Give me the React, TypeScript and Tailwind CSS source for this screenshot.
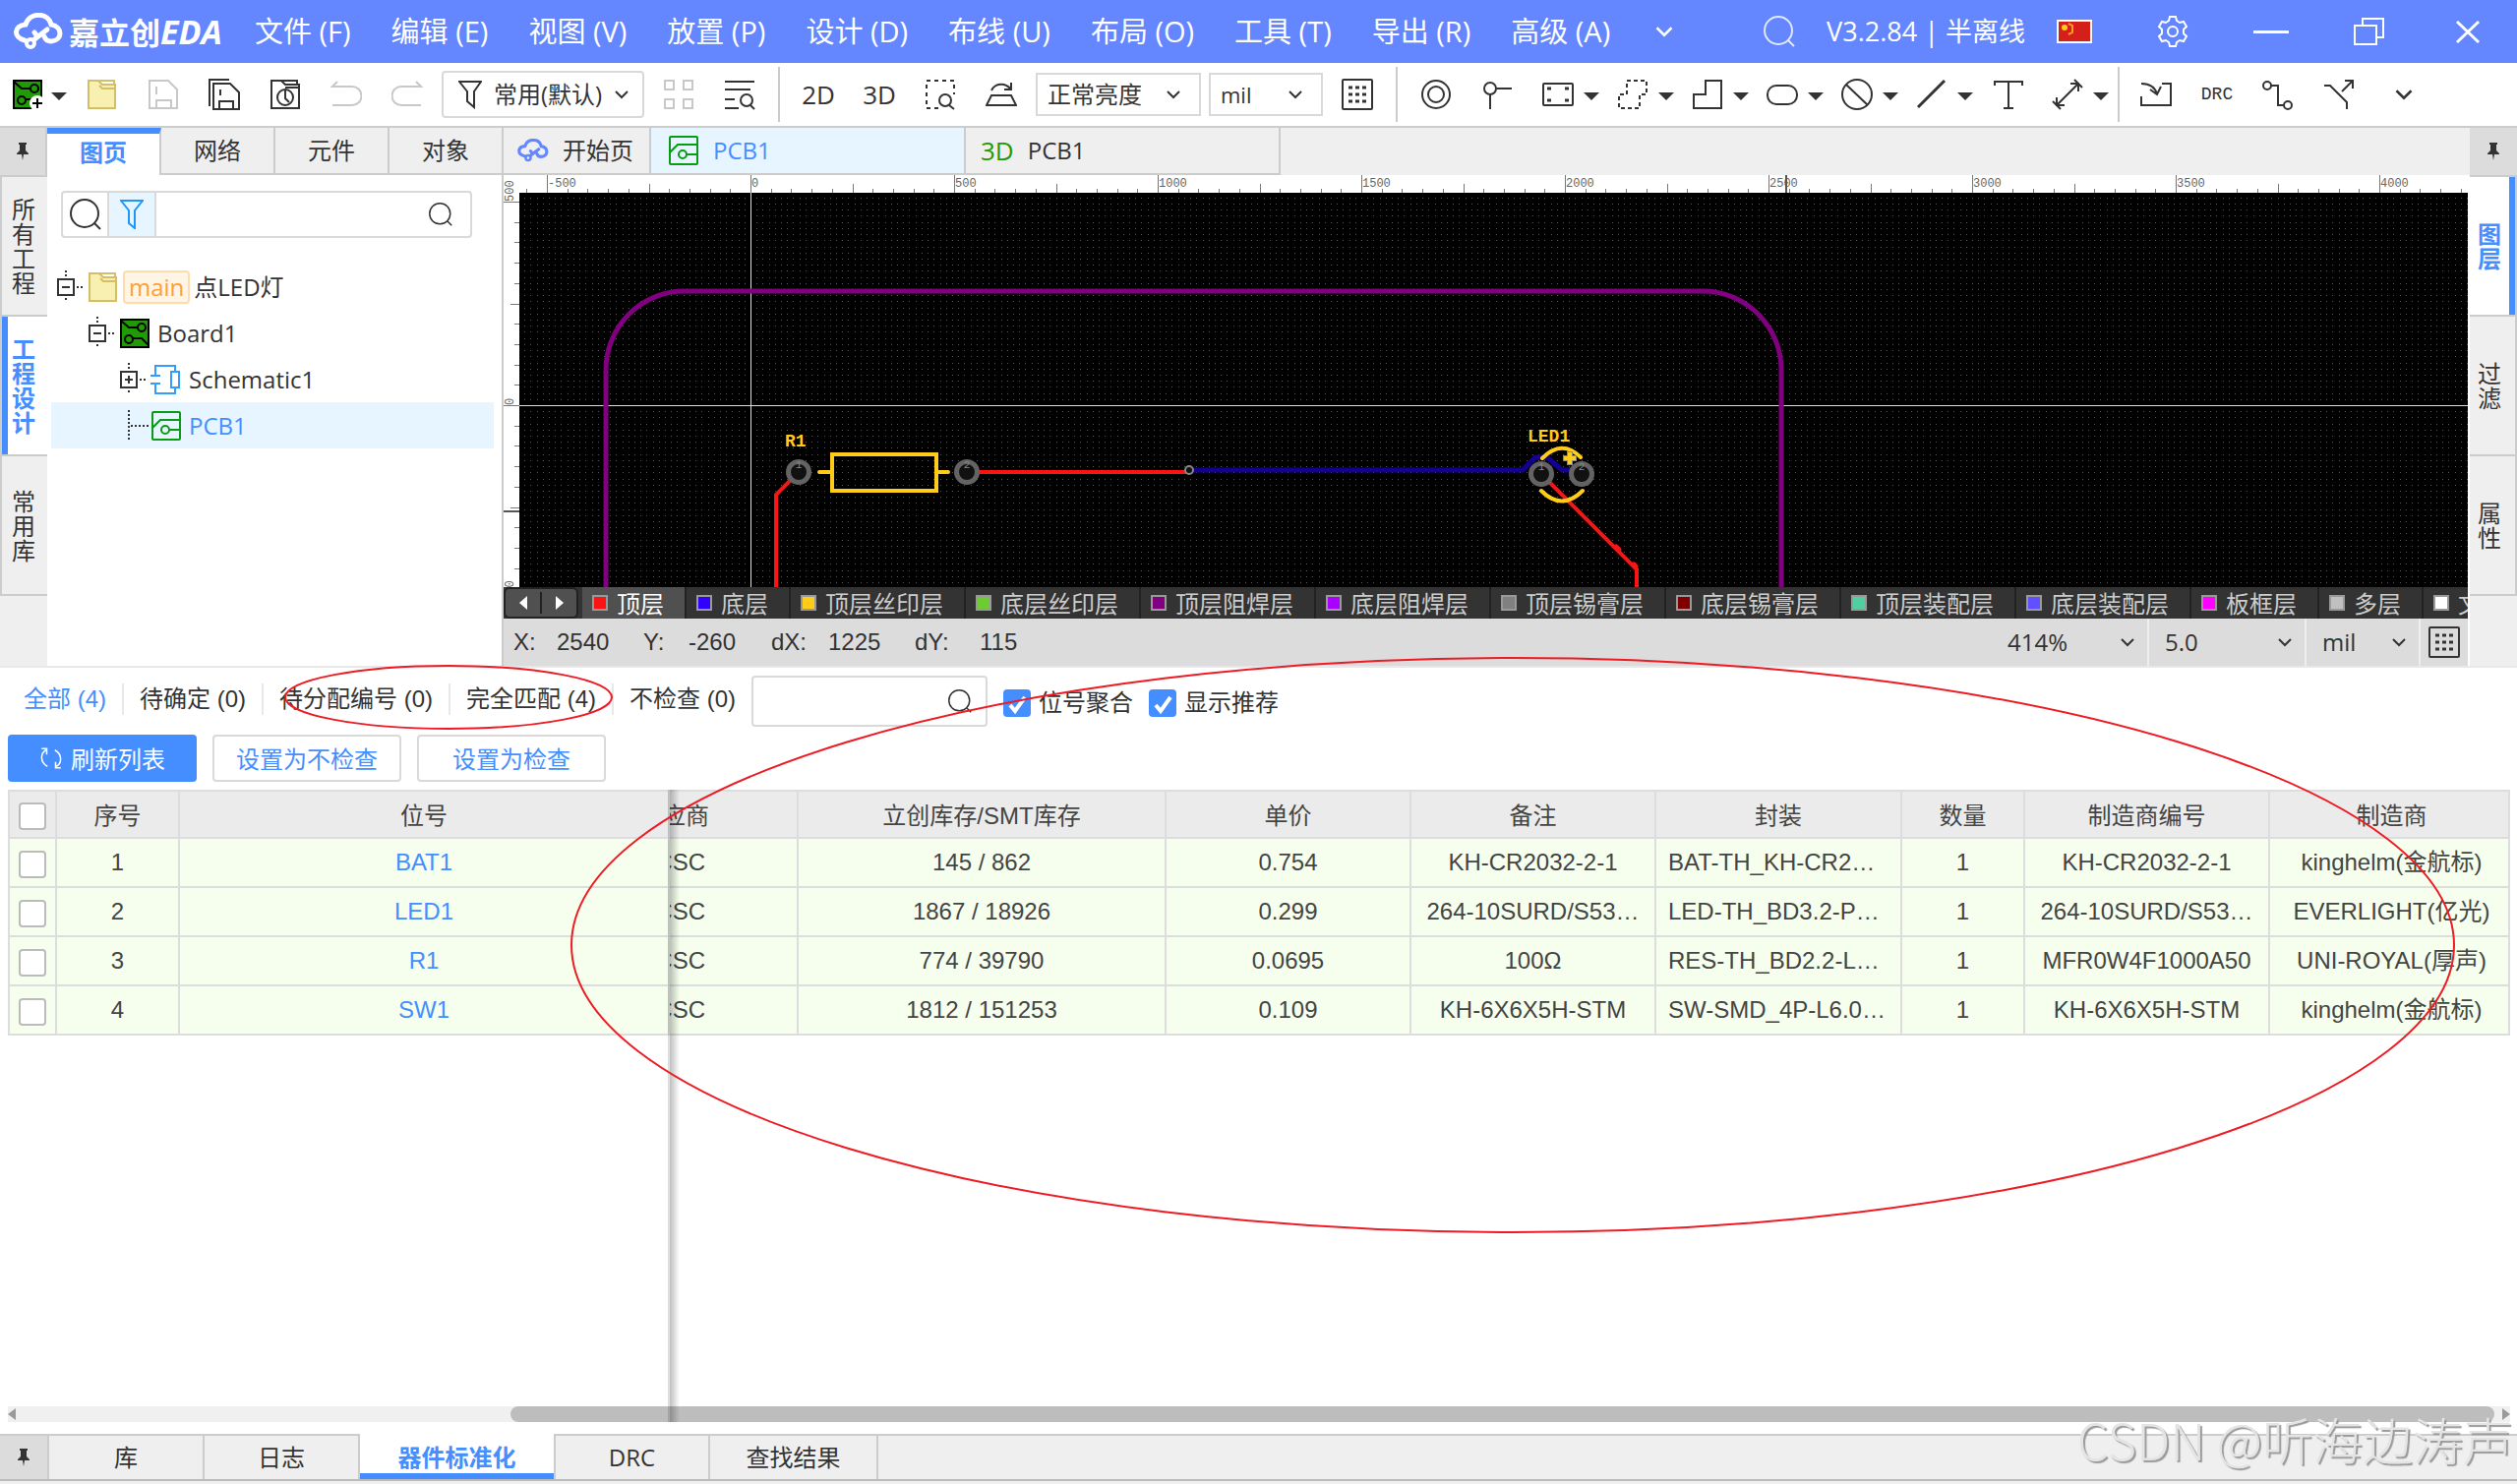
import React from "react";

const menus = [
  "文件 (F)",
  "编辑 (E)",
  "视图 (V)",
  "放置 (P)",
  "设计 (D)",
  "布线 (U)",
  "布局 (O)",
  "工具 (T)",
  "导出 (R)",
  "高级 (A)",
];

const layers = [
  { name: "顶层", color: "bg-[#fa1414]" },
  { name: "底层", color: "bg-[#3200ff]" },
  { name: "顶层丝印层", color: "bg-[#ffcc1a]" },
  { name: "底层丝印层", color: "bg-[#6ecb33]" },
  { name: "顶层阻焊层", color: "bg-[#800080]" },
  { name: "底层阻焊层", color: "bg-[#aa00ff]" },
  { name: "顶层锡膏层", color: "bg-[#808080]" },
  { name: "底层锡膏层", color: "bg-[#800000]" },
  { name: "顶层装配层", color: "bg-[#50d0a0]" },
  { name: "底层装配层", color: "bg-[#6050ff]" },
  { name: "板框层", color: "bg-[#ff00ff]" },
  { name: "多层", color: "bg-[#c0c0c0]" },
  { name: "文档层", color: "bg-white" },
];

const parts = [
  {
    id: 1,
    ref: "BAT1",
    stock: "145 / 862",
    price: "0.754",
    note: "KH-CR2032-2-1",
    pack: "BAT-TH_KH-CR2…",
    mpn: "KH-CR2032-2-1",
    maker: "kinghelm(金航标)",
  },
  {
    id: 2,
    ref: "LED1",
    stock: "1867 / 18926",
    price: "0.299",
    note: "264-10SURD/S53…",
    pack: "LED-TH_BD3.2-P…",
    mpn: "264-10SURD/S53…",
    maker: "EVERLIGHT(亿光)",
  },
  {
    id: 3,
    ref: "R1",
    stock: "774 / 39790",
    price: "0.0695",
    note: "100Ω",
    pack: "RES-TH_BD2.2-L…",
    mpn: "MFR0W4F1000A50",
    maker: "UNI-ROYAL(厚声)",
  },
  {
    id: 4,
    ref: "SW1",
    stock: "1812 / 151253",
    price: "0.109",
    note: "KH-6X6X5H-STM",
    pack: "SW-SMD_4P-L6.0…",
    mpn: "KH-6X6X5H-STM",
    maker: "kinghelm(金航标)",
  },
];

const Icon = ({
  children,
  className = "size-8",
}: {
  children: React.ReactNode;
  className?: string;
}) => (
  <svg
    viewBox="0 0 32 32"
    className={`${className} shrink-0`}
    fill="none"
    stroke="currentColor"
    strokeWidth="2"
    aria-hidden="true"
  >
    {children}
  </svg>
);

const Chevron = ({ className = "size-4" }: { className?: string }) => (
  <svg
    viewBox="0 0 16 16"
    className={`${className} shrink-0 pointer-events-none`}
    fill="none"
    stroke="currentColor"
    strokeWidth="2"
    aria-hidden="true"
  >
    <path d="M2 5l6 6 6-6" />
  </svg>
);

const Caret = () => (
  <svg viewBox="0 0 16 8" className="mt-1 h-2 w-4 shrink-0" fill="#333" aria-hidden="true">
    <path d="M0 0h16l-8 8z" />
  </svg>
);

const SearchIcon = ({ className = "size-8" }: { className?: string }) => (
  <Icon className={className}>
    <circle cx="15" cy="15" r="14" />
    <path d="M25 25l6 6" />
  </Icon>
);

const PinIcon = () => (
  <svg viewBox="0 0 12 18" className="h-[18px] w-3" fill="#333" aria-hidden="true">
    <path d="M2 0h8v2H9v6l3 3v1H7l-1 6-1-6H0v-1l3-3V2H2z" />
  </svg>
);

const CloudIcon = ({ className }: { className: string }) => (
  <svg
    viewBox="0 0 50 38"
    className={`${className} shrink-0`}
    fill="none"
    stroke="currentColor"
    strokeWidth="5"
    strokeLinecap="round"
    aria-hidden="true"
  >
    <path d="M11 28C-1 25 0 13 12 12 16-1 35-1 38 12c12 2 12 16 0 17-4 0-6-2-7-5" />
    <path d="M21 27l13-10M21 20l3 4" />
    <circle cx="17" cy="31" r="4" strokeWidth="4" />
  </svg>
);

const FolderIcon = () => (
  <Icon>
    <path d="M2 2h10l4 4h13v24H2z" fill="#f7f0b0" stroke="#d4bf66" />
    <path d="M12 2h16v4M13 7l3 3h13" stroke="#d4bf66" />
  </Icon>
);

const BoardIcon = ({ plus = false }: { plus?: boolean }) => (
  <Icon>
    <path d="M2 2h28v28H2z" fill="#1f9b06" stroke="#000" />
    <path d="M2 3l8 7h10M30 28l-7-7h-9" stroke="#000" />
    <circle cx="23" cy="10" r="4" stroke="#000" />
    <circle cx="10" cy="22" r="4" stroke="#000" />
    {plus && (
      <>
        <circle cx="26" cy="25" r="8" fill="#fff" stroke="none" />
        <path d="M26 20v10M21 25h10" stroke="#000" />
      </>
    )}
  </Icon>
);

const PcbIcon = () => (
  <Icon>
    <rect x="2" y="2" width="28" height="28" rx="1" stroke="#0a9a14" />
    <path d="M2 18l8-8h20M19 20h11" stroke="#0a9a14" />
    <circle cx="15" cy="20" r="4" stroke="#0a9a14" />
  </Icon>
);

const SchematicIcon = () => (
  <Icon>
    <path d="M5 12V2h20v6M5 20v10h20v-6M0 12h10M0 20h10" stroke="#339cff" />
    <rect x="21" y="8" width="8" height="16" stroke="#339cff" />
  </Icon>
);

const GridIcon = () => (
  <Icon>
    <rect x="1" y="1" width="30" height="30" rx="1" />
    <path d="M7 9h18M7 16h18M7 23h18" strokeWidth="3" strokeDasharray="4 3" />
  </Icon>
);

const Tool = ({
  label,
  className = "",
  children,
}: {
  label: string;
  className?: string;
  children: React.ReactNode;
}) => (
  <button
    aria-label={label}
    className={`flex h-12 w-[62px] shrink-0 items-center justify-center ${className}`}
  >
    {children}
  </button>
);

const ToolMenu = ({ label, children }: { label: string; children: React.ReactNode }) => (
  <button
    aria-label={label}
    className="flex h-12 w-[76px] shrink-0 items-center justify-center gap-[10px]"
  >
    {children}
    <Caret />
  </button>
);

const Divider = () => <div className="mx-2 h-14 w-[2px] shrink-0 bg-[#ccc]" />;

const Title = () => (
  <header className="flex h-16 shrink-0 items-center bg-[#6487ff] pl-[14px] text-[29px] leading-9 text-white">
    <div className="flex w-[245px] shrink-0 items-center gap-[6px] font-bold">
      <CloudIcon className="h-[38px] w-[50px]" />
      <span className="text-[31px] whitespace-nowrap">
        嘉立创<i className="text-[34px]">EDA</i>
      </span>
    </div>
    <nav className="flex items-center gap-[41px] whitespace-nowrap">
      {menus.map((m) => (
        <button key={m}>{m}</button>
      ))}
      <button aria-label="更多菜单" className="ml-1">
        <Chevron className="size-5" />
      </button>
    </nav>
    <div className="ml-auto flex items-center whitespace-nowrap">
      <button aria-label="搜索" className="text-white/80">
        <SearchIcon />
      </button>
      <span className="ml-8 text-[27px]">V3.2.84 | 半离线</span>
      <div className="flex w-[100px] justify-center">
        <svg viewBox="0 0 36 24" className="h-6 w-9" aria-hidden="true">
          <path d="M0 0h36v24H0z" fill="#fff" />
          <path d="M2 2h32v20H2z" fill="#d41f1a" />
          <circle cx="8" cy="8" r="3" fill="#ffc91f" />
          <path d="M12 4l4 2v7l-4 2" fill="none" stroke="#f3a01f" strokeWidth="2" />
        </svg>
      </div>
      <button aria-label="设置" className="flex w-[100px] justify-center">
        <Icon>
          <path d="M13 1h6l1 4 3 2 4-1 3 5-3 3v4l3 3-3 5-4-1-3 2-1 4h-6l-1-4-3-2-4 1-3-5 3-3v-4l-3-3 3-5 4 1 3-2z" />
          <circle cx="16" cy="16" r="5" />
        </Icon>
      </button>
      <button aria-label="最小化" className="flex h-8 w-[100px] items-center justify-center">
        <span className="h-[3px] w-9 bg-white" />
      </button>
      <button aria-label="还原" className="flex w-[100px] justify-center">
        <Icon>
          <path d="M1 10h22v19H1zM9 10V3h21v19h-7" />
        </Icon>
      </button>
      <button aria-label="关闭" className="flex w-[100px] justify-center">
        <Icon>
          <path d="M5 6l22 21M27 6L5 27" strokeWidth="3" />
        </Icon>
      </button>
    </div>
  </header>
);

const Toolbar = () => (
  <div className="flex h-[66px] shrink-0 items-center border-b-2 border-[#ccc] bg-white text-[#333]">
    <button aria-label="新建" className="ml-3 flex h-12 w-[61px] shrink-0 items-center gap-2">
      <BoardIcon plus />
      <Caret />
    </button>
    <Tool label="打开">
      <FolderIcon />
    </Tool>
    <Tool label="保存" className="text-[#c8c8c8]">
      <Icon>
        <path d="M2 2h19l9 9v19H2zM9 30v-8h15v8M9 8v8" />
      </Icon>
    </Tool>
    <Tool label="全部保存">
      <Icon>
        <path d="M1 28V1h20M5 5h17l9 9v17H5zM11 31v-8h14v8M12 11v6" />
      </Icon>
    </Tool>
    <Tool label="历史">
      <Icon>
        <path d="M2 30V2h10l4 4h14v24zM12 2h16v4M16 9h14" />
        <circle cx="16" cy="19" r="8" />
        <path d="M16 11v9l4 4" />
      </Icon>
    </Tool>
    <Tool label="撤销" className="text-[#c8c8c8]">
      <Icon>
        <path d="M7 3L2 8h20a9 9 0 0 1 0 19H2" />
      </Icon>
    </Tool>
    <Tool label="重做" className="text-[#c8c8c8]">
      <Icon>
        <path d="M25 3l5 5H10a9 9 0 0 0 0 19h20" />
      </Icon>
    </Tool>
    <button className="ml-1 flex h-12 w-[206px] shrink-0 items-center rounded border-2 border-[#d9d9d9] pl-[15px] text-2xl whitespace-nowrap">
      <svg viewBox="0 0 24 30" className="h-[30px] w-6" fill="none" stroke="#333" strokeWidth="2">
        <path d="M1 2h22l-7 10v16l-7-6V12z" />
      </svg>
      <span className="ml-3">常用(默认)</span>
      <Chevron className="ml-3 size-4" />
    </button>
    <Tool label="阵列" className="ml-1 text-[#c8c8c8]">
      <Icon>
        <path d="M2 2h9v9H2zM21 2h9v9h-9zM2 21h9v9H2zM21 21h9v9h-9z" />
      </Icon>
    </Tool>
    <Tool label="查找">
      <Icon>
        <path d="M1 3h30M1 11h26M1 21h10M1 30h14" />
        <circle cx="23" cy="22" r="6" />
        <path d="M27 27l4 4" />
      </Icon>
    </Tool>
    <Divider />
    <Tool label="2D">
      <span className="text-[26px]">2D</span>
    </Tool>
    <Tool label="3D">
      <span className="text-[26px]">3D</span>
    </Tool>
    <Tool label="框选缩放">
      <Icon>
        <path d="M14 30H2V2h28v14" strokeDasharray="4 4" />
        <circle cx="21" cy="22" r="6" />
        <path d="M25 27l5 4" />
      </Icon>
    </Tool>
    <Tool label="翻转">
      <Icon>
        <path d="M6 17h20l5 10H1zM6 12c4-8 14-8 19-2M26 4v7h-7" />
      </Icon>
    </Tool>
    <div className="relative ml-1 w-[168px] shrink-0">
      <select
        aria-label="亮度"
        className="h-11 w-full appearance-none border-2 border-[#d9d9d9] pl-[10px] text-2xl"
      >
        <option>正常亮度</option>
      </select>
      <Chevron className="absolute top-[14px] right-5 size-4" />
    </div>
    <div className="relative ml-2 w-[116px] shrink-0">
      <select
        aria-label="单位"
        className="h-11 w-full appearance-none border-2 border-[#d9d9d9] pl-[10px] text-[22px]"
      >
        <option>mil</option>
      </select>
      <Chevron className="absolute top-[14px] right-5 size-4" />
    </div>
    <Tool label="网格" className="ml-1">
      <GridIcon />
    </Tool>
    <Divider />
    <Tool label="过孔">
      <Icon>
        <circle cx="16" cy="16" r="14" />
        <circle cx="16" cy="16" r="8" />
      </Icon>
    </Tool>
    <Tool label="焊盘">
      <Icon>
        <circle cx="9" cy="10" r="6" />
        <path d="M9 16v15M15 10h16" />
      </Icon>
    </Tool>
    <div className="ml-[6px] flex">
      <ToolMenu label="器件">
        <Icon>
          <rect x="1" y="5" width="30" height="22" rx="1" />
          <path d="M5 10h4M23 10h4M5 22h4M23 22h4" strokeWidth="3" />
        </Icon>
      </ToolMenu>
      <ToolMenu label="选区">
        <Icon>
          <path d="M10 2h20v14h-7v14H2V16h8z" strokeDasharray="4 3" />
        </Icon>
      </ToolMenu>
      <ToolMenu label="多边形">
        <Icon>
          <path d="M14 2h16v28H2V16h12z" />
        </Icon>
      </ToolMenu>
      <ToolMenu label="椭圆">
        <Icon>
          <rect x="1" y="7" width="30" height="19" rx="9" />
        </Icon>
      </ToolMenu>
      <ToolMenu label="禁止区域">
        <Icon>
          <circle cx="16" cy="16" r="15" />
          <path d="M5 6l22 21" />
        </Icon>
      </ToolMenu>
      <ToolMenu label="线条">
        <Icon>
          <path d="M2 29L29 2" strokeWidth="3" />
        </Icon>
      </ToolMenu>
    </div>
    <Tool label="文本" className="pr-2">
      <Icon>
        <path d="M2 7V3h28v4M16 3v27M11 30h10" />
      </Icon>
    </Tool>
    <ToolMenu label="尺寸">
      <Icon>
        <path d="M5 27L27 5M1 23l8 8M23 1l8 8M5 19v8h8M19 5h8v8" />
      </Icon>
    </ToolMenu>
    <div className="mr-[6px] h-14 w-[2px] shrink-0 bg-[#ccc]" />
    <Tool label="导入">
      <Icon>
        <path d="M22 5h9v22H1v-9M1 5c8 0 14 3 16 11M10 11l7 5 4-8" />
      </Icon>
    </Tool>
    <Tool label="DRC">
      <span className="font-['Liberation_Mono',monospace] text-lg">DRC</span>
    </Tool>
    <Tool label="布线">
      <Icon>
        <circle cx="5" cy="7" r="4" />
        <path d="M9 7h7v20h6" />
        <circle cx="26" cy="27" r="4" />
      </Icon>
    </Tool>
    <Tool label="推挤">
      <Icon>
        <path d="M1 7h6l17 17v7M19 13L30 2M22 2h8v8" />
      </Icon>
    </Tool>
    <Tool label="更多工具" className="ml-1">
      <Chevron className="size-5" />
    </Tool>
  </div>
);

const SideTab = ({
  text,
  active,
  side,
}: {
  text: string;
  active?: boolean;
  side: "left" | "right";
}) => (
  <button
    className={`flex h-[142px] w-full shrink-0 items-center border-b-2 border-[#ccc] text-2xl leading-[25px] ${
      side === "left" ? "border-l-2" : "justify-end border-r-2"
    } ${active ? "bg-white font-bold text-[#448eff]" : "bg-[#efefef] text-[#333]"}`}
  >
    {side === "left" && (
      <span className={`mr-1 w-[6px] self-stretch ${active ? "bg-[#448eff]" : ""}`} />
    )}
    <span className="w-6 break-all">{text}</span>
    {side === "right" && (
      <span className={`ml-2 w-[6px] self-stretch ${active ? "bg-[#448eff]" : ""}`} />
    )}
  </button>
);

const Expander = ({ open }: { open: boolean }) => (
  <svg viewBox="0 0 32 36" className="h-9 w-8 shrink-0" fill="none" stroke="#333" strokeWidth="2">
    <rect x="2" y="10" width="16" height="16" />
    <path d={open ? "M6 18h8" : "M6 18h8M10 14v8"} />
    <path d="M10 1v7M10 29v4M21 18h8" strokeDasharray="2 2" />
  </svg>
);

const LeftPanel = () => (
  <aside className="flex w-[464px] shrink-0 flex-col border-r-2 border-[#ccc] bg-white text-2xl text-[#333]">
    <div className="flex h-12">
      <button className="flex-1 border-t-[6px] border-r-2 border-t-[#448eff] border-r-[#ccc] pb-1 font-bold text-[#448eff]">
        图页
      </button>
      {["网络", "元件", "对象"].map((t) => (
        <button key={t} className="flex-1 border-r-2 border-b-2 border-[#ccc] bg-[#efefef] last:border-r-0">
          {t}
        </button>
      ))}
    </div>
    <div className="mt-4 mr-[30px] ml-[14px] flex h-12 rounded border-2 border-[#d9d9d9]">
      <button aria-label="搜索" className="flex w-[45px] items-center justify-center">
        <SearchIcon />
      </button>
      <button
        aria-label="筛选"
        className="flex w-[50px] items-center justify-center border-x-2 border-[#d9d9d9] bg-[#e6f5ff]"
      >
        <svg viewBox="0 0 24 30" className="h-[30px] w-6" fill="none" stroke="#1a96ff" strokeWidth="2">
          <path d="M1 1h22l-8 10v18l-6-5V11z" />
        </svg>
      </button>
      <input aria-label="筛选内容" className="min-w-0 flex-1 px-2 outline-none" />
      <button aria-label="查找" className="pr-[18px]">
        <SearchIcon className="size-6" />
      </button>
    </div>
    <div className="mt-[26px] mr-2 ml-1">
      <div className="flex h-[47px] items-center pl-[5px]">
        <Expander open />
        <FolderIcon />
        <span className="ml-1 rounded border-2 border-[#ffdcaa] bg-[#fff5e6] px-1 leading-[30px] text-[#ffa033]">
          main
        </span>
        <span className="ml-1">点LED灯</span>
      </div>
      <div className="flex h-[47px] items-center pl-[37px]">
        <Expander open />
        <BoardIcon />
        <span className="ml-[7px]">Board1</span>
      </div>
      <div className="flex h-[47px] items-center pl-[69px]">
        <Expander open={false} />
        <SchematicIcon />
        <span className="ml-[7px]">Schematic1</span>
      </div>
      <div className="flex h-[47px] items-center bg-[#e6f5ff] pl-[69px] text-[#448eff]">
        <svg viewBox="0 0 32 36" className="h-9 w-8 shrink-0" fill="none" stroke="#333" strokeWidth="2">
          <path d="M10 2v32M12 18h18" strokeDasharray="2 2" />
        </svg>
        <PcbIcon />
        <span className="ml-[7px]">PCB1</span>
      </div>
    </div>
  </aside>
);

// 414% zoom: 50 mil is 20.7px
const STEP = 20.7;
const DOT = 6.21;
const OX = 251;
const OY = 234;

const dotRow = Array.from({ length: 520 }, (_, i) => `M${Math.round((i - 38) * DOT)} 0h1`).join("");

const Pad = ({ x, y, n }: { x: number; y: number; n: string }) => (
  <g>
    <circle cx={x} cy={y} r="10.5" fill="#111" stroke="#636363" strokeWidth="5" />
    <text x={x} y={y - 4} textAnchor="middle" fontSize="11" fill="#888">
      {n}
    </text>
  </g>
);

const Board = () => (
  <svg className="block h-[419px] w-full bg-white font-['Liberation_Mono',monospace]" aria-label="PCB 画布">
    <defs>
      <path id="dots" d={dotRow} stroke="#555" strokeWidth="1" shapeRendering="crispEdges" />
      <clipPath id="work">
        <rect x="16" y="18" width="4000" height="401" />
      </clipPath>
    </defs>
    <g stroke="#777" shapeRendering="crispEdges">
      {Array.from({ length: 120 }, (_, i) => {
        const n = i - 11;
        const x = Math.round(OX + n * STEP);
        return <path key={n} d={`M${x + 0.5} ${n % 10 === 0 ? 0 : n % 5 === 0 ? 9 : 14}V18`} />;
      })}
      {Array.from({ length: 20 }, (_, i) => {
        const n = i - 10;
        const y = Math.round(OY + n * STEP);
        return <path key={n} d={`M${n % 10 === 0 ? 0 : n % 5 === 0 ? 7 : 11} ${y + 0.5}H16`} />;
      })}
    </g>
    <g fill="#666" fontSize="12">
      {Array.from({ length: 10 }, (_, i) => (
        <text key={i} x={Math.round(OX + (i - 1) * 207) + 1} y="12">
          {(i - 1) * 500}
        </text>
      ))}
      {[500, 0, -500].map((v) => (
        <text key={v} transform={`translate(10 ${Math.round(OY - v * 0.414)}) rotate(-90)`}>
          {v}
        </text>
      ))}
    </g>
    <path d="M1304 0V18M0 342H16" stroke="#555" strokeWidth="2" />
    <g clipPath="url(#work)">
      <rect x="16" y="18" width="100%" height="401" fill="#000" />
      <g transform={`translate(${OX} ${OY})`} fill="none">
        {Array.from({ length: 66 }, (_, i) => (
          <use key={i} href="#dots" y={Math.round((i - 35) * DOT) + 0.5} />
        ))}
        <path d="M.5-234V200M-251 .5H4000" stroke="#ddd" shapeRendering="crispEdges" />
        <path d="M-147 200V-36a80 80 0 0 1 80-80H968a80 80 0 0 1 80 80V200" stroke="#800080" strokeWidth="5" />
        <path d="M451 66H785l13-13h12l15 13h20" stroke="#140090" strokeWidth="5" />
        <g stroke="#fa1414" strokeWidth="4" strokeLinecap="round">
          <path d="M220 68H446M49 68L26 91V200M804 70l97 97V200" />
          <path d="M880 144l3 3M898 162l2 2" strokeWidth="5" />
        </g>
        <g stroke="#ffcc1a" strokeWidth="4" strokeLinecap="round">
          <path d="M83 50H189V87H83zM70 68H83M189 68h12" />
          <path d="M805 54q20-20 39-1M804 87q21 21 42 0" />
        </g>
        <Pad x={49} y={68} n="1" />
        <Pad x={220} y={68} n="2" />
        <Pad x={804} y={70} n="1" />
        <Pad x={845} y={70} n="2" />
        <circle cx="446" cy="66" r="4" fill="#111" stroke="#888" strokeWidth="2" />
        <path d="M833 47v14M826 54h14" stroke="#888" strokeWidth="6" />
        <path d="M833 48v12M827 54h12" stroke="#ffcc1a" strokeWidth="4" />
        <g
          fill="#ffcc1a"
          fontSize="18"
          fontWeight="bold"
          className="font-['Liberation_Mono',monospace]"
        >
          <text x="35" y="42">
            R1
          </text>
          <text x="790" y="37">
            LED1
          </text>
        </g>
      </g>
    </g>
  </svg>
);

const StatusSelect = ({
  label,
  value,
  className,
}: {
  label: string;
  value: string;
  className: string;
}) => (
  <div className={`relative shrink-0 border-r-2 border-[#eee] ${className}`}>
    <select aria-label={label} className="h-12 w-full appearance-none pl-4">
      <option>{value}</option>
    </select>
    <Chevron className="absolute top-4 right-3 size-4" />
  </div>
);

const Editor = () => (
  <main className="flex min-w-0 flex-1 flex-col bg-[#efefef] text-2xl text-[#333]">
    <div className="flex h-12">
      <button className="flex w-[150px] items-center gap-[14px] border-r-2 border-b-2 border-[#ccc] pl-[14px] whitespace-nowrap">
        <CloudIcon className="h-6 w-8 text-[#6487ff]" />
        开始页
      </button>
      <button className="flex w-[320px] items-center gap-[14px] border-r-2 border-b-2 border-[#ccc] bg-[#e6f5ff] pl-[17px] text-[#448eff]">
        <PcbIcon />
        PCB1
      </button>
      <button className="flex w-[320px] items-center gap-[14px] border-r-2 border-b-2 border-[#ccc] pl-[15px]">
        <span className="text-[26px] text-[#1f9b06]">3D</span>
        PCB1
      </button>
    </div>
    <div className="border-r-2 border-white">
      <Board />
      <div className="flex h-8 overflow-hidden bg-[#333] text-[#ccc]">
        <div className="mr-1 flex w-[76px] shrink-0 items-center rounded-md border-2 border-[#222] bg-[#505050]">
          <button aria-label="上一层" className="flex flex-1 justify-center border-r-2 border-[#222] py-1">
            <svg viewBox="0 0 8 14" className="h-[14px] w-2" fill="#fff">
              <path d="M8 0v14L0 7z" />
            </svg>
          </button>
          <button aria-label="下一层" className="flex flex-1 justify-center">
            <svg viewBox="0 0 8 14" className="h-[14px] w-2" fill="#fff">
              <path d="M0 0v14l8-7z" />
            </svg>
          </button>
        </div>
        {layers.map((l, i) => (
          <button
            key={l.name}
            className={`flex shrink-0 items-center border-r-2 border-[#222] pr-[21px] pl-[10px] whitespace-nowrap ${
              i === 0 ? "bg-[#505050] text-white" : ""
            }`}
          >
            <span className={`mr-[9px] size-4 border-2 border-[#999] ${l.color}`} />
            <span className="pt-[2px]">{l.name}</span>
          </button>
        ))}
      </div>
      <div className="flex h-12 items-center bg-[#dcdcdc] font-['Liberation_Sans',sans-serif]">
        <span className="w-[54px] pl-[10px]">X:</span>
        <span className="w-[88px]">2540</span>
        <span className="w-[46px]">Y:</span>
        <span className="w-[84px]">-260</span>
        <span className="w-[58px]">dX:</span>
        <span className="w-[88px]">1225</span>
        <span className="w-[66px]">dY:</span>
        <span>115</span>
        <div className="ml-auto flex items-center font-['Open_Sans',sans-serif]">
          <StatusSelect label="缩放" value="414%" className="w-[160px]" />
          <StatusSelect label="栅格" value="5.0" className="w-[160px]" />
          <StatusSelect label="单位" value="mil" className="w-[116px]" />
          <button aria-label="网格" className="px-2">
            <GridIcon />
          </button>
        </div>
      </div>
    </div>
  </main>
);

const Check = ({ label }: { label: string }) => (
  <label className="mr-4 flex items-center gap-2 pt-1">
    <span className="relative flex">
      <input type="checkbox" defaultChecked className="size-7 appearance-none rounded bg-[#448eff]" />
      <svg
        viewBox="0 0 28 28"
        className="pointer-events-none absolute inset-0 size-7"
        fill="none"
        stroke="#fff"
        strokeWidth="4"
      >
        <path d="M7 16l5 6L22 8" />
      </svg>
    </span>
    {label}
  </label>
);

const boxClass = "block mx-auto size-7 appearance-none rounded border-2 border-[#bbb] bg-white";

const PartsTable = () => (
  <table className="w-full table-fixed border-separate border-spacing-0 border-t-2 border-l-2 border-[#ddd] text-center text-[#444] [&_td]:border-r-2 [&_td]:border-b-2 [&_td]:border-[#ddd] [&_td]:whitespace-nowrap [&_th]:border-r-2 [&_th]:border-b-2 [&_th]:border-[#ddd] [&_th]:pt-[3px] [&_th]:font-normal">
    <colgroup>
      <col className="w-12" />
      <col className="w-[125px]" />
      <col className="w-[498px]" />
      <col className="w-[131px]" />
      <col className="w-[374px]" />
      <col className="w-[249px]" />
      <col className="w-[249px]" />
      <col className="w-[250px]" />
      <col className="w-[125px]" />
      <col className="w-[249px]" />
      <col />
    </colgroup>
    <thead>
      <tr className="h-12 bg-[#ebebeb]">
        <th>
          <input type="checkbox" aria-label="全选" className={boxClass} />
        </th>
        <th>序号</th>
        <th>位号</th>
        <th>
          <div className="flex justify-end overflow-hidden">
            <span className="w-[250px] shrink-0">供应商</span>
          </div>
        </th>
        <th>立创库存/SMT库存</th>
        <th>单价</th>
        <th>备注</th>
        <th>封装</th>
        <th>数量</th>
        <th>制造商编号</th>
        <th className="pl-[5px]">制造商</th>
      </tr>
    </thead>
    <tbody>
      {parts.map((p) => (
        <tr key={p.id} className="h-[50px] bg-[#f6ffed]">
          <td className="pt-1">
            <input type="checkbox" aria-label={p.ref} className={boxClass} />
          </td>
          <td>{p.id}</td>
          <td>
            <a href="#" className="text-[#448eff]">
              {p.ref}
            </a>
          </td>
          <td>
            <div className="flex justify-end overflow-hidden">
              <span className="w-[250px] shrink-0">LCSC</span>
            </div>
          </td>
          <td>{p.stock}</td>
          <td>{p.price}</td>
          <td>{p.note}</td>
          <td className="pl-3 text-left">{p.pack}</td>
          <td>1</td>
          <td>{p.mpn}</td>
          <td className="pl-[5px]">{p.maker}</td>
        </tr>
      ))}
    </tbody>
  </table>
);

const BottomPanel = () => (
  <section className="flex min-h-0 flex-1 flex-col border-t-2 border-[#e8e8e8] bg-white pr-[7px] pl-2 font-['Liberation_Sans','Noto_Sans_CJK_SC',sans-serif] text-2xl text-[#333]">
    <div className="mt-2 flex h-[52px] shrink-0 items-center whitespace-nowrap">
      <div className="flex items-center divide-x-2 divide-[#e8e8e8] pb-1">
        <button className="h-8 px-4 leading-8 text-[#448eff]">全部 (4)</button>
        <button className="h-8 px-4 leading-8">待确定 (0)</button>
        <button className="h-8 px-4 leading-8">待分配编号 (0)</button>
        <button className="h-8 px-4 leading-8">完全匹配 (4)</button>
        <button className="h-8 px-4 leading-8">不检查 (0)</button>
      </div>
      <div className="mr-4 flex h-[52px] w-60 items-center rounded border-2 border-[#d9d9d9] pr-[14px]">
        <input aria-label="搜索器件" className="min-w-0 flex-1 px-2 outline-none" />
        <SearchIcon className="size-6" />
      </div>
      <Check label="位号聚合" />
      <Check label="显示推荐" />
    </div>
    <div className="mt-2 mb-2 flex h-12 shrink-0 gap-4">
      <button className="flex w-48 items-center justify-center gap-2 rounded bg-[#448eff] text-white">
        <Icon className="size-6">
          <path d="M11 27C1 22 1 9 9 5M3 3h7v8M21 5c10 5 10 18 2 22M29 29h-7v-8" />
        </Icon>
        <span className="pt-1">刷新列表</span>
      </button>
      <button className="w-48 rounded border-2 border-[#d9d9d9] pt-1 text-[#448eff]">设置为不检查</button>
      <button className="w-48 rounded border-2 border-[#d9d9d9] pt-1 text-[#448eff]">设置为检查</button>
    </div>
    <div className="relative flex flex-1 flex-col justify-between">
      <PartsTable />
      <div className="flex h-4 items-center justify-between bg-[#f0f0f0]">
        <svg viewBox="0 0 8 12" className="h-3 w-2" fill="#999">
          <path d="M8 0v12L0 6z" />
        </svg>
        <div className="mr-2 ml-auto h-4 w-[79.3%] rounded-full bg-[#bdbdbd]" />
        <svg viewBox="0 0 8 12" className="h-3 w-2" fill="#999">
          <path d="M0 0v12l8-6z" />
        </svg>
      </div>
      {/* edge of the frozen columns */}
      <div className="pointer-events-none absolute inset-y-0 left-[671px] w-3 border-l-2 border-black/10 bg-linear-to-r from-black/25 to-transparent" />
    </div>
    <div className="h-3 shrink-0" />
  </section>
);

const BottomTabs = () => (
  <footer className="flex h-[51px] shrink-0 flex-col bg-[#efefef] text-2xl text-[#333]">
    <div className="flex h-12 border-b-2 border-[#bbb]">
      <button
        aria-label="固定"
        className="flex w-[50px] items-center justify-center border-t-2 border-r-2 border-[#ccc] bg-[#dcdcdc]"
      >
        <PinIcon />
      </button>
      <button className="w-[158px] border-t-2 border-r-2 border-[#ccc]">库</button>
      <button className="w-[158px] border-t-2 border-r-2 border-[#ccc]">日志</button>
      <button className="w-[197px] border-b-[6px] border-[#448eff] bg-white pt-2 font-bold text-[#448eff]">
        器件标准化
      </button>
      <button className="w-[159px] border-t-2 border-r-2 border-l-2 border-[#ccc]">DRC</button>
      <button className="w-[171px] border-t-2 border-r-2 border-[#ccc]">查找结果</button>
      <div className="flex-1 border-t-2 border-[#ccc]" />
    </div>
  </footer>
);

export default function App() {
  return (
    <div className="relative flex min-h-screen flex-col overflow-hidden bg-white font-['Open_Sans','Noto_Sans_CJK_SC',sans-serif]">
      <Title />
      <Toolbar />
      <div className="flex shrink-0">
        <div className="flex w-12 shrink-0 flex-col bg-[#efefef]">
          <button
            aria-label="固定"
            className="flex h-[50px] items-center justify-center border-r-2 border-b-2 border-[#ccc] bg-[#dcdcdc]"
          >
            <PinIcon />
          </button>
          <SideTab side="left" text="所有工程" />
          <SideTab side="left" text="工程设计" active />
          <SideTab side="left" text="常用库" />
        </div>
        <LeftPanel />
        <Editor />
        <div className="flex w-12 shrink-0 flex-col bg-[#efefef]">
          <button
            aria-label="固定"
            className="flex h-[50px] items-center justify-center border-b-2 border-[#ccc] bg-[#dcdcdc]"
          >
            <PinIcon />
          </button>
          <SideTab side="right" text="图层" active />
          <SideTab side="right" text="过滤" />
          <SideTab side="right" text="属性" />
        </div>
      </div>
      <BottomPanel />
      <BottomTabs />

      {/* hand-drawn marks over the window */}
      <svg
        className="pointer-events-none absolute inset-0 h-full w-full"
        fill="none"
        stroke="#ed1c24"
        strokeWidth="2"
        aria-hidden="true"
      >
        <ellipse cx="456" cy="709" rx="166" ry="32" />
        <ellipse cx="1538" cy="961" rx="957" ry="292" />
      </svg>
      <div className="pointer-events-none absolute right-1 bottom-4 font-['Noto_Sans_CJK_SC',sans-serif] text-[51px] leading-[60px] font-light whitespace-nowrap text-[#e4e4e4] [text-shadow:2px_2px_1px_#999]">
        CSDN @听海边涛声
      </div>
    </div>
  );
}
